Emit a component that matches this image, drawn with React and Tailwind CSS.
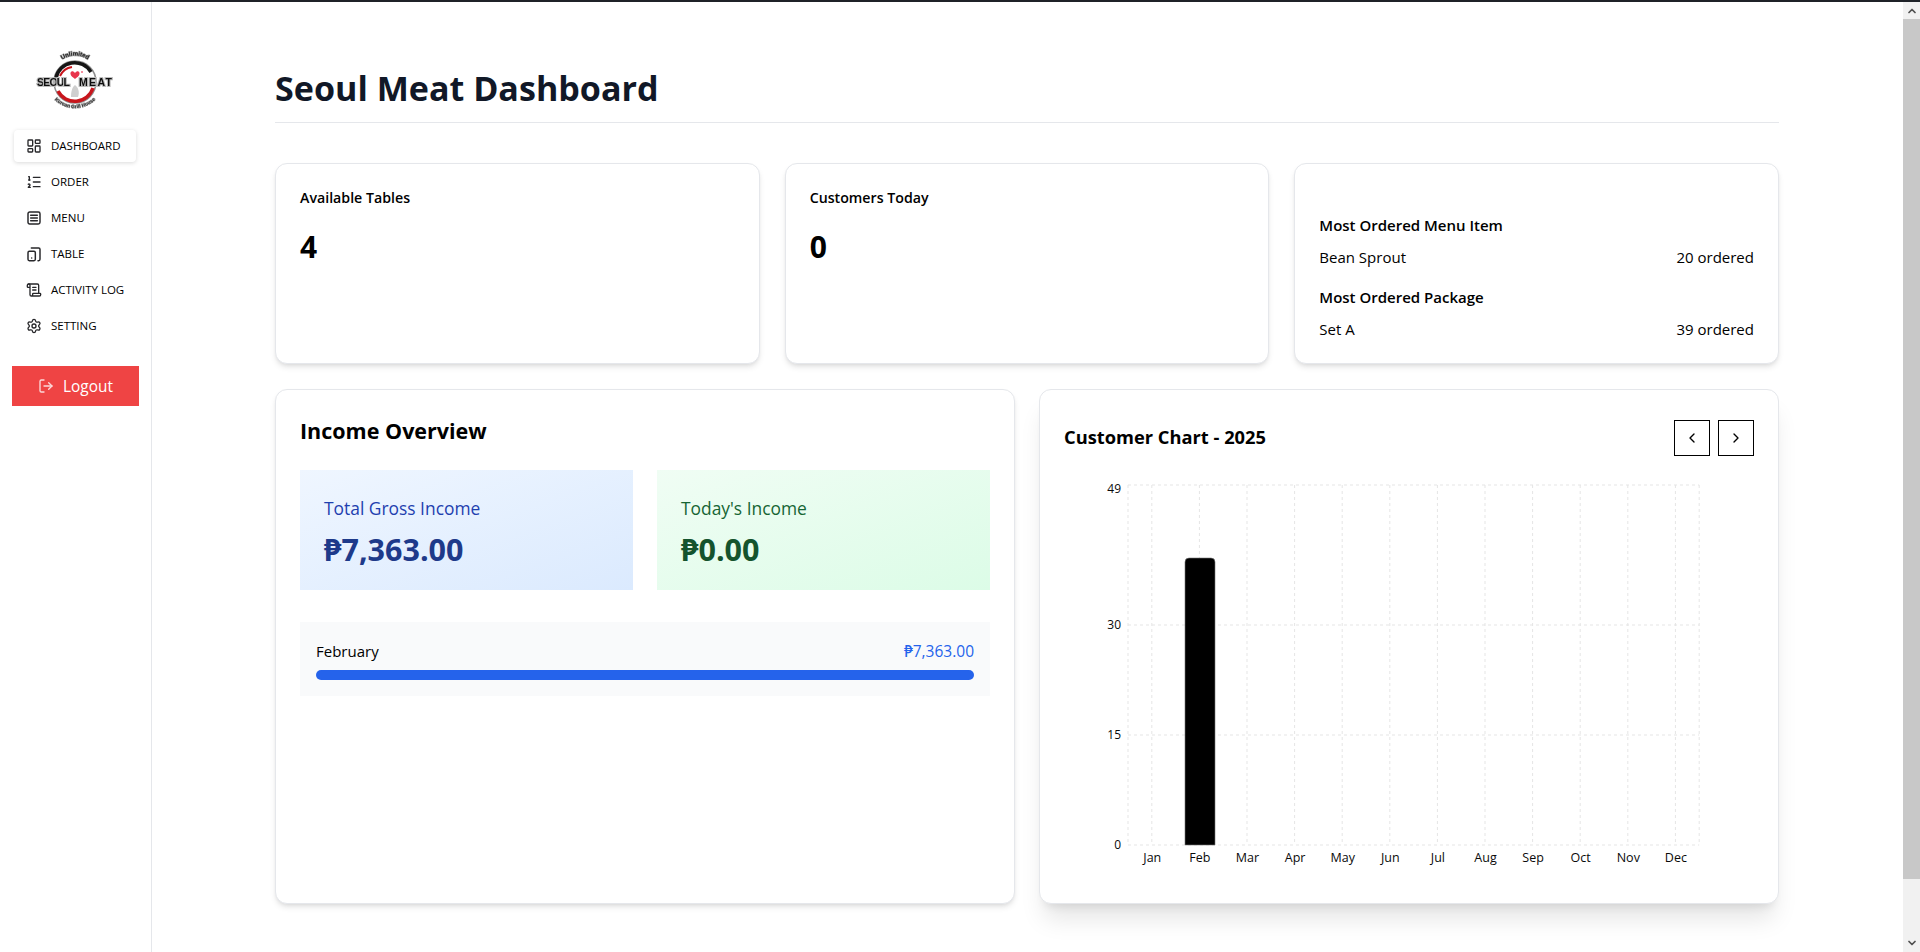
import { LayoutDashboard, ListOrdered, ScrollText, Settings, LogOut, ChevronLeft, ChevronRight, ChevronUp, ChevronDown } from "lucide-react";

const MONTHS = ["Jan", "Feb", "Mar", "Apr", "May", "Jun", "Jul", "Aug", "Sep", "Oct", "Nov", "Dec"];
const TICKS = [
  { label: "49", y: 5, textY: 13 },
  { label: "30", y: 145, textY: 148.5 },
  { label: "15", y: 255, textY: 258.5 },
  { label: "0", y: 365, textY: 369 },
];

function MenuIcon(props) {
  return (
    <svg viewBox="0 0 24 24" fill="none" stroke="currentColor" strokeWidth="2.2" strokeLinecap="round" strokeLinejoin="round" {...props}>
      <rect x="3" y="3" width="18" height="18" rx="2.5" />
      <path d="M7 8h10M7 12h10M7 16h10" />
    </svg>
  );
}

function TableIcon(props) {
  return (
    <svg viewBox="0 0 24 24" fill="none" stroke="currentColor" strokeWidth="2.2" strokeLinecap="round" strokeLinejoin="round" {...props}>
      <path d="M3 10a2 2 0 0 1 2-2h7a2 2 0 0 1 2 2v10a2 2 0 0 1-2 2H5a2 2 0 0 1-2-2z" />
      <path d="M8 3h11a2 2 0 0 1 2 2v15a2 2 0 0 1-2 2h-1" />
      <path d="M8.500 18h.01" />
    </svg>
  );
}

const NAV = [
  { label: "DASHBOARD", icon: LayoutDashboard, active: true },
  { label: "ORDER", icon: ListOrdered },
  { label: "MENU", icon: MenuIcon },
  { label: "TABLE", icon: TableIcon },
  { label: "ACTIVITY LOG", icon: ScrollText },
  { label: "SETTING", icon: Settings },
];

function Logo() {
  return (
    <svg viewBox="30 48 90 66" className="w-[90px] h-[66px] block">
      <defs>
        <path id="logo-top" d="M56 65 A24 24 0 0 1 94 65" />
        <path id="logo-bottom" d="M49 92 A29 29 0 0 0 101 92" />
        <filter id="logo-soft" x="-10%" y="-10%" width="120%" height="120%">
          <feGaussianBlur stdDeviation="0.4" />
        </filter>
      </defs>
      <g filter="url(#logo-soft)">
        <circle cx="75" cy="82" r="21" fill="#fff" stroke="#8f8f8f" strokeWidth="1.5" />
        <path d="M56 78 A19 19 0 0 1 91 72" fill="none" stroke="#161616" strokeWidth="3.500" />
        <path d="M58 91 A19 19 0 0 0 93 88" fill="none" stroke="#c8161d" strokeWidth="3.500" />
        <path d="M60 76 A16 16 0 0 1 72 67" fill="none" stroke="#c8161d" strokeWidth="2" />
        <path d="M75 73c-2-3-5-2-4.500 1 .3 2 2.500 3.500 4.500 5 2-1.500 4.200-3 4.500-5 .5-3-2.500-4-4.500-1z" fill="#e8344e" />
        <circle cx="82" cy="72" r="1" fill="#f06a80" />
        <path d="M71 97c0-5 1-10 4-12 3 2 5 7 3 12z" fill="#cfcfcf" />
        <text fontFamily="'Liberation Sans',sans-serif" fontSize="6" fontWeight="700" fill="#222" stroke="#999" strokeWidth="1.2" paintOrder="stroke">
          <textPath href="#logo-top" startOffset="50%" textAnchor="middle">Unlimited</textPath>
        </text>
        <text fontFamily="'Liberation Sans',sans-serif" fontSize="5" fontWeight="700" fill="#333" stroke="#aaa" strokeWidth="1" paintOrder="stroke">
          <textPath href="#logo-bottom" startOffset="50%" textAnchor="middle">Korean Grill House</textPath>
        </text>
        <text x="37" y="86" fontFamily="'Liberation Sans',sans-serif" fontSize="10.500" fontWeight="700" fill="#111" stroke="#bdbdbd" strokeWidth="2.2" paintOrder="stroke" textLength="33">SEOUL</text>
        <text x="79" y="86" fontFamily="'Liberation Sans',sans-serif" fontSize="10.500" fontWeight="700" fill="#111" stroke="#bdbdbd" strokeWidth="2.2" paintOrder="stroke" textLength="33">MEAT</text>
      </g>
    </svg>
  );
}

function Sidebar() {
  return (
    <aside className="w-[152px] shrink-0 border-r border-[#e5e7eb] flex flex-col pt-[46px] px-3">
      <div className="flex justify-center pr-[1px]">
        <Logo />
      </div>
      <nav className="mt-[16px] ml-[2px] flex flex-col gap-[4px]">
        {NAV.map((item) => {
          const Icon = item.icon;
          return (
            <div
              key={item.label}
              className={`h-[32px] w-[122px] flex items-center gap-[9px] pl-[12px] text-[11.5px] text-black rounded-sm ${item.active ? "bg-white shadow-[0_1px_4px_rgba(0,0,0,0.15)]" : ""}`}
            >
              <Icon className="w-[16px] h-[16px] text-[#27272a] shrink-0" />
              <span>{item.label}</span>
            </div>
          );
        })}
      </nav>
      <button className="mt-[24px] w-[127px] h-[40px] pt-[2px] bg-[#ef4444] text-white text-[15.4px] flex items-center justify-center gap-[9px]">
        <LogOut className="w-[16px] h-[16px] opacity-80 -mt-[3px]" />
        Logout
      </button>
    </aside>
  );
}

function CustomerChart() {
  const left = 64;
  const bandW = 47.6;
  const vLines = [0, ...MONTHS.map((_, i) => bandW * i + bandW / 2), bandW * 12];
  return (
    <svg viewBox="0 0 688 400" className="w-[688px] h-[400px] block">
      <g stroke="#e5e5e5" strokeWidth="1" strokeDasharray="3 3" fill="none">
        {TICKS.map((t) => (
          <line key={t.label} x1={left} x2={left + bandW * 12} y1={t.y} y2={t.y} />
        ))}
        {vLines.map((x) => (
          <line key={x} x1={left + x} x2={left + x} y1={5} y2={365} />
        ))}
      </g>
      <path d="M121 365V82a4 4 0 0 1 4-4h22a4 4 0 0 1 4 4V365z" fill="#000" stroke="#777" strokeWidth="0.6" />
      <g fontSize="12" fill="#0a0a0a" textAnchor="end">
        {TICKS.map((t) => (
          <text key={t.label} x={57} y={t.textY}>{t.label}</text>
        ))}
      </g>
      <g fontSize="12.5" fill="#0a0a0a" textAnchor="middle">
        {MONTHS.map((m, i) => (
          <text key={m} x={left + 0.5 + bandW * i + bandW / 2} y={382}>{m}</text>
        ))}
      </g>
    </svg>
  );
}

function Scrollbar() {
  return (
    <div className="w-[17px] shrink-0 bg-[#f1f1f1] flex flex-col">
      <div className="h-[17px] flex items-center justify-center">
        <ChevronUp className="w-[12px] h-[12px] text-[#505050]" strokeWidth={3.5} />
      </div>
      <div className="h-[860px] bg-[#c8c8c8]" />
      <div className="flex-1 flex items-end justify-center pb-[3px]">
        <ChevronDown className="w-[12px] h-[12px] text-[#505050]" strokeWidth={3.5} />
      </div>
    </div>
  );
}

function App() {
  return (
    <div className="h-[952px] w-full overflow-hidden flex flex-col bg-white text-black font-['Open_Sans','Noto_Sans',sans-serif]">
      <div className="h-[2px] bg-[#1f2228] shrink-0" />
      <div className="flex flex-1 min-h-0">
        <Sidebar />
        <main className="flex-1 min-w-0 pl-[123px] pr-[124px] pt-[62px]">
          <h1 className="text-[34.100px] leading-[48px] font-bold text-[#111827] pb-[10px] border-b border-[#e5e7eb]">Seoul Meat Dashboard</h1>

          <div className="grid grid-cols-3 gap-[25px] mt-[40px] h-[201px]">
            <div className="bg-white border border-[#e5e7eb] rounded-xl shadow-md px-[24px] pt-[24px]">
              <p className="text-[14.2px] font-semibold leading-[20px]">Available Tables</p>
              <p className="text-[30px] font-bold leading-[36px] mt-[21px]">4</p>
            </div>
            <div className="bg-white border border-[#e5e7eb] rounded-xl shadow-md px-[24px] pt-[24px]">
              <p className="text-[14.2px] font-semibold leading-[20px]">Customers Today</p>
              <p className="text-[30px] font-bold leading-[36px] mt-[21px]">0</p>
            </div>
            <div className="bg-white border border-[#e5e7eb] rounded-xl shadow-md px-[24px] pt-[49px] text-[15px] leading-[24px]">
              <p className="font-semibold">Most Ordered Menu Item</p>
              <div className="flex justify-between mt-[8px]">
                <span>Bean Sprout</span>
                <span>20 ordered</span>
              </div>
              <p className="font-semibold mt-[16px]">Most Ordered Package</p>
              <div className="flex justify-between mt-[8px]">
                <span>Set A</span>
                <span>39 ordered</span>
              </div>
            </div>
          </div>

          <div className="grid grid-cols-2 gap-[24px] mt-[25px] h-[515px]">
            <div className="bg-white border border-[#e5e7eb] rounded-xl shadow-md px-[24px] pt-[25px]">
              <h2 className="text-[21.5px] font-bold leading-[32px]">Income Overview</h2>
              <div className="grid grid-cols-2 gap-[24px] mt-[23px]">
                <div className="h-[120px] px-[24px] pt-[24px] bg-gradient-to-br from-[#eff6ff] to-[#dbeafe]">
                  <p className="text-[17.4px] leading-[28px] font-medium text-[#1e40af]">Total Gross Income</p>
                  <p className="text-[30.5px] leading-[36px] font-bold text-[#1e3a8a] mt-[9px]">₱7,363.00</p>
                </div>
                <div className="h-[120px] px-[24px] pt-[24px] bg-gradient-to-br from-[#f0fdf4] to-[#dcfce7]">
                  <p className="text-[17.4px] leading-[28px] font-medium text-[#166534]">Today's Income</p>
                  <p className="text-[30.5px] leading-[36px] font-bold text-[#14532d] mt-[9px]">₱0.00</p>
                </div>
              </div>
              <div className="mt-[32px] h-[74px] bg-[#f9fafb] px-[16px] pt-[17px]">
                <div className="flex justify-between text-[15px] leading-[24px]">
                  <span>February</span>
                  <span className="text-[#2563eb] font-medium text-[15.5px]">₱7,363.00</span>
                </div>
                <div className="mt-[7px] h-[10px] rounded-full bg-[#2563eb]" />
              </div>
            </div>

            <div className="bg-white border border-[#e5e7eb] rounded-xl shadow-xl px-[24px] pt-[30px]">
              <div className="flex items-center justify-between">
                <h2 className="text-[18.3px] font-bold leading-[28px] pb-[2px]">Customer Chart - 2025</h2>
                <div className="flex gap-[8px]">
                  <button className="w-[36px] h-[36px] border border-black flex items-center justify-center">
                    <ChevronLeft className="w-[16px] h-[16px]" />
                  </button>
                  <button className="w-[36px] h-[36px] border border-black flex items-center justify-center">
                    <ChevronRight className="w-[16px] h-[16px]" />
                  </button>
                </div>
              </div>
              <div className="mt-[24px]">
                <CustomerChart />
              </div>
            </div>
          </div>
        </main>
        <Scrollbar />
      </div>
    </div>
  );
}

export default App;
